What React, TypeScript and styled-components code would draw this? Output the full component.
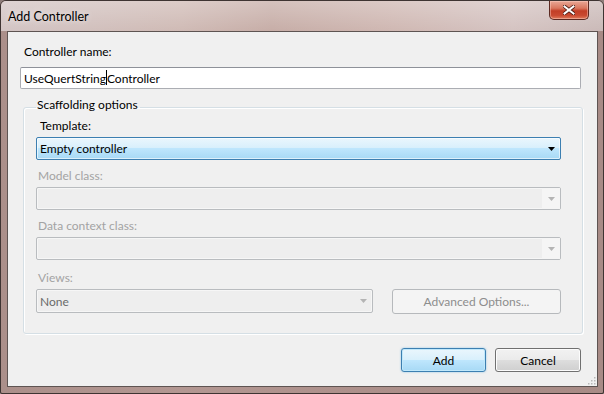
import React from 'react';
import styled, { createGlobalStyle } from 'styled-components';

const GlobalStyle = createGlobalStyle`
    html, body {
        margin: 0;
        padding: 0;
        background: #8e7d7a;
    }
    body {
        font-family: Lato, "Liberation Sans", sans-serif;
        font-size: 12px;
        color: #000;
    }
`;

const Window = styled.div`
    box-sizing: border-box;
    width: 604px;
    height: 394px;
    display: flex;
    flex-direction: column;
    border: 1px solid #3e3432;
    border-radius: 6px 6px 2px 2px;
    background: linear-gradient(to right, #ab8f8a 0%, #b39792 30%, #ad908b 60%, #a88b86 100%);
    overflow: hidden;
`;

const TitleBar = styled.div`
    height: 30px;
    flex: 0 0 30px;
    display: flex;
    align-items: flex-start;
    padding: 0 14px 0 7px;
    background:
        linear-gradient(to bottom, rgba(255, 255, 255, 0.35), rgba(255, 255, 255, 0.12)),
        linear-gradient(to right, #cdbdbc 0%, #c9b1ab 30%, #bfa29b 45%, #c9aea8 65%, #cfbbb9 85%, #c3b0ae 100%);
`;

const Title = styled.span`
    margin-top: 8px;
    font-size: 12.5px;
    color: #000;
    text-shadow: 0 0 6px rgba(255, 255, 255, 0.8);
`;

const CloseButton = styled.div`
    margin-left: auto;
    width: 40px;
    height: 19px;
    box-sizing: border-box;
    display: flex;
    align-items: center;
    justify-content: center;
    border: 1px solid #5c2a22;
    border-top: none;
    border-radius: 0 0 5px 5px;
    background: linear-gradient(to bottom, #e9a896 0%, #d9775f 40%, #c23e26 55%, #c94a31 80%, #e07c5c 100%);
    box-shadow: inset 0 0 0 1px rgba(255, 210, 200, 0.45);
`;

const Client = styled.div`
    flex: 1;
    margin: 0 5px 6px 6px;
    border: 1px solid #5e5452;
    background: #f0f0f0;
    padding: 12px 15px 12px 12px;
    display: flex;
    flex-direction: column;
    position: relative;
`;

const Label = styled.div<{ $disabled?: boolean }>`
    height: 15px;
    line-height: 15px;
    padding-left: ${p => (p.$disabled ? 2 : 4)}px;
    color: ${p => (p.$disabled ? '#a3a3a3' : '#000')};
    white-space: nowrap;
`;

const NameLabel = styled(Label)`
    height: 16px;
    line-height: 16px;
`;

const TextBox = styled.div`
    box-sizing: border-box;
    margin-top: 7px;
    height: 22px;
    margin-right: 1px;
    border: 1px solid #abadb3;
    border-top-color: #8e9199;
    border-radius: 2px;
    background: #fff;
    display: flex;
    align-items: center;
    padding-left: 3px;
    font-size: 12px;
`;

const Caret = styled.span`
    display: inline-block;
    width: 1px;
    height: 15px;
    background: #000;
    vertical-align: middle;
    margin-top: -2px;
`;

const Group = styled.fieldset`
    margin: 8px -1px 0 3px;
    padding: 1px 21px 19px 12px;
    border: 1px solid #d5dfe5;
    border-radius: 3px;
    box-shadow: inset 1px 1px 0 #fff, 1px 1px 0 #fff;
    display: flex;
    flex-direction: column;
    min-width: 0;
`;

const Legend = styled.legend`
    padding: 0 2px 4px 1px;
    margin-left: 0;
    line-height: 16px;
    font-size: 12px;
`;

const Field = styled.div<{ $extra?: number }>`
    display: flex;
    flex-direction: column;
    gap: 4px;
    margin-top: ${p => p.$extra ?? 0}px;
`;

const Combo = styled.div<{ $variant: 'active' | 'disabled' | 'readonly' }>`
    box-sizing: border-box;
    height: ${p => (p.$variant === 'readonly' ? 24 : 23)}px;
    display: flex;
    align-items: stretch;
    border: 1px solid ${p => (p.$variant === 'active' ? '#3c7fb1' : '#b9bcbf')};
    border-radius: 2px;
    background: ${p =>
        p.$variant === 'active'
            ? 'linear-gradient(to bottom, #eaf6fd 0%, #d9f0fc 45%, #bee6fd 50%, #a7d9f5 100%)'
            : '#eeeeee'};
    box-shadow: ${p => (p.$variant === 'active' ? 'inset 0 0 0 1px rgba(255,255,255,0.6)' : 'inset 0 0 0 1px #f6f6f6')};
    font-size: 12px;
`;

const ComboText = styled.div<{ $muted?: boolean }>`
    flex: 1;
    display: flex;
    align-items: center;
    padding-left: 3px;
    color: ${p => (p.$muted ? '#6a6a6a' : '#000')};
`;

const ComboArrow = styled.div<{ $plain?: boolean }>`
    width: 18px;
    display: flex;
    align-items: center;
    justify-content: center;
    background: ${p => (p.$plain ? 'transparent' : '#f5f5f5')};
`;

const ViewsRow = styled.div`
    display: flex;
    gap: 19px;
    align-items: flex-start;
`;

const ViewsCombo = styled(Combo)`
    flex: 0 0 337px;
`;

const Button = styled.div<{ $kind: 'default' | 'normal' | 'disabled'; $width?: number }>`
    box-sizing: border-box;
    height: ${p => (p.$kind === 'disabled' ? 25 : 24)}px;
    ${p => (p.$width ? `width: ${p.$width}px;` : 'flex: 1;')}
    display: flex;
    align-items: center;
    justify-content: center;
    border-radius: 3px;
    font-size: 12px;
    border: 1px solid ${p => (p.$kind === 'default' ? '#3c7fb1' : p.$kind === 'normal' ? '#707070' : '#b6b9bc')};
    color: ${p => (p.$kind === 'disabled' ? '#8d8d8d' : '#000')};
    background: ${p =>
        p.$kind === 'default'
            ? 'linear-gradient(to bottom, #eaf6fd 0%, #d9f0fc 48%, #bee6fd 52%, #a7d9f5 100%)'
            : p.$kind === 'normal'
            ? 'linear-gradient(to bottom, #f2f2f2 0%, #ebebeb 48%, #dddddd 52%, #cfcfcf 100%)'
            : '#f4f4f4'};
    box-shadow: ${p =>
        p.$kind === 'default'
            ? 'inset 0 0 0 1px #c0e8fb, 0 0 2px rgba(60,160,220,0.6)'
            : p.$kind === 'normal'
            ? 'inset 0 0 0 1px #fcfcfc'
            : 'none'};
`;

const Footer = styled.div`
    margin-top: 14px;
    display: flex;
    justify-content: flex-end;
    gap: 9px;
    margin-right: 1px;
`;

const Grip = styled.svg`
    position: absolute;
    right: 1px;
    bottom: 1px;
`;

const Arrow = ({ color }: { color: string }) => (
    <svg width="7" height="4" viewBox="0 0 7 4">
        <path d="M0 0 H7 L3.5 4 Z" fill={color} />
    </svg>
);

const CloseGlyph = () => (
    <svg width="12" height="10" viewBox="0 0 12 10">
        <path
            d="M1.5 1.5 L10.5 8.5 M10.5 1.5 L1.5 8.5"
            stroke="#4a1a12"
            strokeWidth="3.6"
            strokeLinecap="square"
        />
        <path
            d="M1.5 1.5 L10.5 8.5 M10.5 1.5 L1.5 8.5"
            stroke="#ffffff"
            strokeWidth="2"
            strokeLinecap="square"
        />
    </svg>
);

const App = () => {
    return (
        <React.Fragment>
            <GlobalStyle />
            <Window>
                <TitleBar>
                    <Title>Add Controller</Title>
                    <CloseButton>
                        <CloseGlyph />
                    </CloseButton>
                </TitleBar>
                <Client>
                    <NameLabel>Controller name:</NameLabel>
                    <TextBox>
                        <span>UseQuertString</span>
                        <Caret />
                        <span>Controller</span>
                    </TextBox>
                    <Group>
                        <Legend>Scaffolding options</Legend>
                        <Field>
                            <Label>Template:</Label>
                            <Combo $variant="active">
                                <ComboText>Empty controller</ComboText>
                                <ComboArrow $plain>
                                    <Arrow color="#000" />
                                </ComboArrow>
                            </Combo>
                        </Field>
                        <Field $extra={8}>
                            <Label $disabled>Model class:</Label>
                            <Combo $variant="disabled">
                                <ComboText />
                                <ComboArrow>
                                    <Arrow color="#b4b4b4" />
                                </ComboArrow>
                            </Combo>
                        </Field>
                        <Field $extra={8}>
                            <Label $disabled>Data context class:</Label>
                            <Combo $variant="disabled">
                                <ComboText />
                                <ComboArrow>
                                    <Arrow color="#b4b4b4" />
                                </ComboArrow>
                            </Combo>
                        </Field>
                        <Field $extra={10}>
                            <Label $disabled>Views:</Label>
                            <ViewsRow>
                                <ViewsCombo $variant="readonly">
                                    <ComboText $muted>None</ComboText>
                                    <ComboArrow $plain>
                                        <Arrow color="#b4b4b4" />
                                    </ComboArrow>
                                </ViewsCombo>
                                <Button $kind="disabled">Advanced Options...</Button>
                            </ViewsRow>
                        </Field>
                    </Group>
                    <Footer>
                        <Button $kind="default" $width={85}>Add</Button>
                        <Button $kind="normal" $width={86}>Cancel</Button>
                    </Footer>
                    <Grip width="9" height="9" viewBox="0 0 9 9">
                        {[[7, 1], [4, 4], [7, 4], [1, 7], [4, 7], [7, 7]].map(([x, y]) => (
                            <rect key={`${x}-${y}`} x={x} y={y} width="1.5" height="1.5" fill="#b8b8b8" />
                        ))}
                    </Grip>
                </Client>
            </Window>
        </React.Fragment>
    );
};

export default App;
